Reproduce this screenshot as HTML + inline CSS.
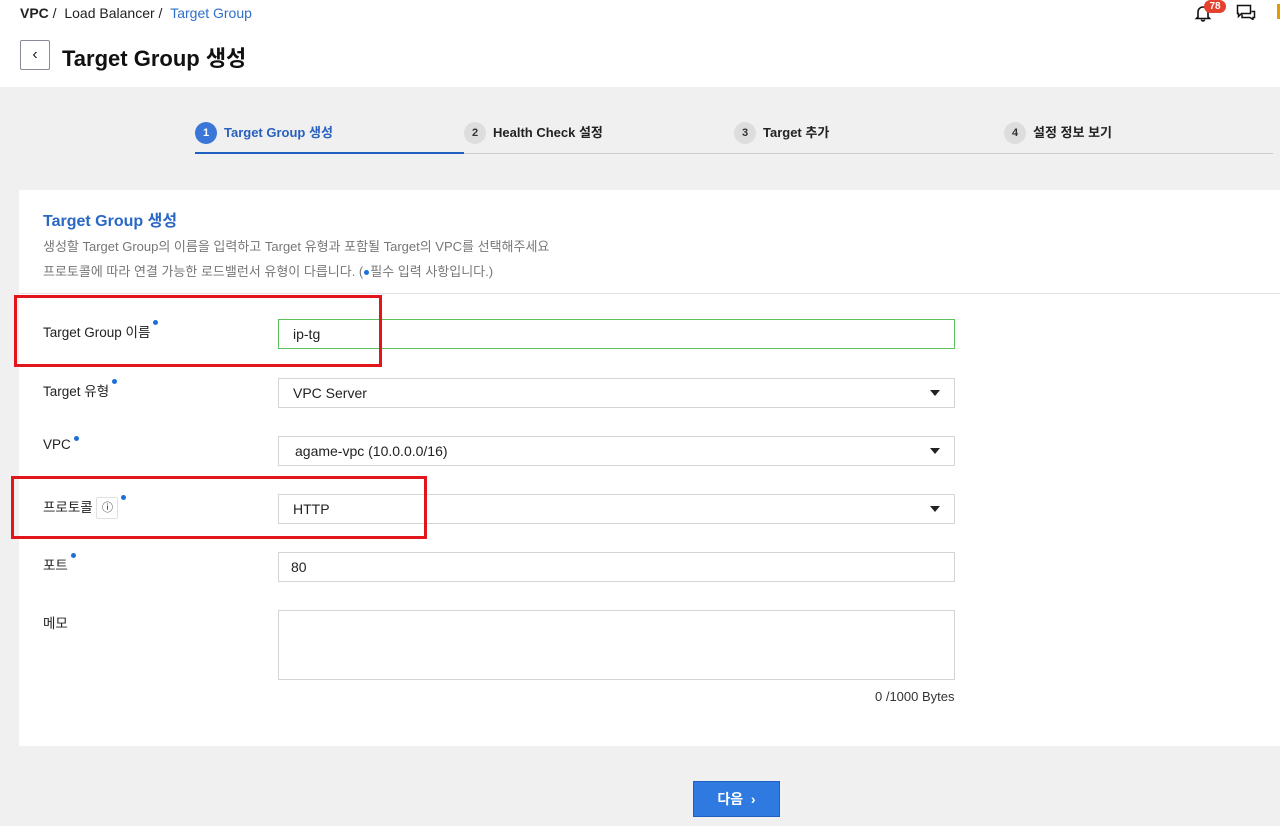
<!DOCTYPE html>
<html><head><meta charset="utf-8"><style>
*{box-sizing:border-box;margin:0;padding:0}
body{width:1280px;height:826px;overflow:hidden;background:#f0f0f0;font-family:"Liberation Sans","Noto Sans CJK KR",sans-serif;color:#222;position:relative}
.abs{position:absolute}
.top{position:absolute;left:0;top:0;width:1280px;height:87px;background:#fff}
.card{position:absolute;left:19px;top:190px;width:1261px;height:556px;background:#fff}
.lbl{position:absolute;left:43px;font-size:13.5px;color:#222}
.dot{display:inline-block;width:5px;height:5px;border-radius:50%;background:#1f6fd9;vertical-align:top;margin-left:3px;margin-top:-1px}
.inp{position:absolute;left:278px;width:677px;height:30px;border:1px solid #d5d5d5;background:#fff;font-size:14px;padding-left:14px;line-height:28px}
.arr{position:absolute;right:14px;top:11px;width:0;height:0;border-left:5px solid transparent;border-right:5px solid transparent;border-top:6px solid #222}
.step{position:absolute;top:122px;font-size:13px;font-weight:bold;color:#222;line-height:22px}
.num{display:inline-block;width:22px;height:22px;border-radius:50%;background:#ddd;color:#333;font-size:11px;text-align:center;line-height:22px;margin-right:7px;vertical-align:top}
.red{position:absolute;border:3px solid #e0161c}
</style></head><body>
<div class="top"></div>
<div class="abs" style="left:20px;top:5px;font-size:14px"><b>VPC</b> / &nbsp;Load Balancer / &nbsp;<span style="color:#2f6fc9">Target Group</span></div>
<div class="abs" style="left:20px;top:40px;width:30px;height:30px;border:1px solid #8a8a9a;border-radius:2px;text-align:center;line-height:27px;font-size:16px">&#8249;</div>
<div class="abs" style="left:62px;top:41px;font-size:22px;font-weight:bold;color:#111">Target Group 생성</div>
<svg class="abs" style="left:1194px;top:4px" width="18" height="18" viewBox="0 0 18 18"><path d="M4 13V8a5 5 0 0 1 10 0v5l1.5 1.5h-13z M7.5 15.5a1.5 1.5 0 0 0 3 0" fill="none" stroke="#111" stroke-width="1.6"/></svg>
<div class="abs" style="left:1204px;top:0;width:22px;height:13px;border-radius:7px;background:#e5412f;color:#fff;font-size:10px;font-weight:bold;text-align:center;line-height:13px">78</div>
<svg class="abs" style="left:1236px;top:4px" width="20" height="16" viewBox="0 0 20 16"><path d="M1.5 1.5h13v8h-9l-3 3v-3h-1z M6 10.5v3h8l3 2v-2h1.5v-6h-3" fill="none" stroke="#111" stroke-width="1.5"/></svg>
<div class="abs" style="left:1277px;top:4px;width:3px;height:15px;background:#e59a00"></div>

<div class="abs" style="left:195px;top:153px;width:1078px;height:1px;background:#ccc"></div>
<div class="abs" style="left:195px;top:152px;width:269px;height:2px;background:#1f5fbf"></div>
<div class="step" style="left:195px;color:#2860c0"><span class="num" style="background:#3b77d8;color:#fff">1</span>Target Group 생성</div>
<div class="step" style="left:464px"><span class="num">2</span>Health Check 설정</div>
<div class="step" style="left:734px"><span class="num">3</span>Target 추가</div>
<div class="step" style="left:1004px"><span class="num">4</span>설정 정보 보기</div>

<div class="card"></div>
<div class="abs" style="left:43px;top:207px;font-size:16px;font-weight:bold;color:#2b68c4">Target Group 생성</div>
<div class="abs" style="left:43px;top:234px;font-size:13px;color:#777;line-height:25px">생성할 Target Group의 이름을 입력하고 Target 유형과 포함될 Target의 VPC를 선택해주세요<br>프로토콜에 따라 연결 가능한 로드밸런서 유형이 다릅니다. (<span class="dot" style="margin:0 1px;vertical-align:middle"></span>필수 입력 사항입니다.)</div>
<div class="abs" style="left:19px;top:293px;width:1261px;height:1px;background:#e3e3e3"></div>

<div class="lbl" style="top:321px">Target Group 이름<span class="dot"></span></div>
<div class="inp" style="top:319px;border-color:#5cc05c">ip-tg</div>
<div class="lbl" style="top:380px">Target 유형<span class="dot"></span></div>
<div class="inp" style="top:378px">VPC Server<div class="arr"></div></div>
<div class="lbl" style="top:437px">VPC<span class="dot"></span></div>
<div class="inp" style="top:436px;padding-left:16px">agame-vpc (10.0.0.0/16)<div class="arr"></div></div>
<div class="lbl" style="top:496px">프로토콜 <span style="display:inline-block;width:22px;height:22px;border:1px solid #e0e0e0;border-radius:2px;text-align:center;line-height:20px;font-size:11px;vertical-align:middle">&#9432;</span><span class="dot"></span></div>
<div class="inp" style="top:494px">HTTP<div class="arr"></div></div>
<div class="lbl" style="top:554px">포트<span class="dot"></span></div>
<div class="inp" style="top:552px;padding-left:12px">80</div>
<div class="lbl" style="top:612px">메모</div>
<div class="inp" style="top:610px;height:70px"></div>
<div class="abs" style="left:875px;top:689px;font-size:13px;color:#333">0 /1000 Bytes</div>

<div class="red" style="left:14px;top:295px;width:368px;height:72px"></div>
<div class="red" style="left:11px;top:476px;width:416px;height:63px"></div>

<div class="abs" style="left:693px;top:781px;width:87px;height:36px;background:#2f7ae0;border:1px solid #1f5fbf;color:#fff;font-size:14px;font-weight:bold;text-align:center;line-height:34px">다음 &nbsp;&#8250;</div>
</body></html>
